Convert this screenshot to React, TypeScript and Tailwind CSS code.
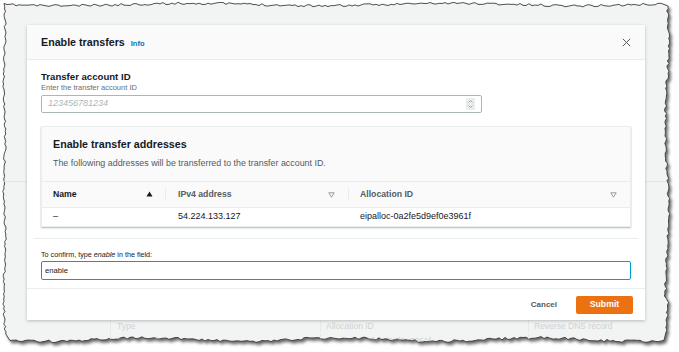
import React from 'react';

// torn paper edge around the screenshot
function makeRand(seed: number) {
  let s = seed;
  return () => {
    s = (s * 16807) % 2147483647;
    return (s - 1) / 2147483646;
  };
}

function tornPoints() {
  const r = makeRand(11);
  const pts: [number, number][] = [];
  for (let x = 4; x < 662; x += 3) pts.push([x, 4.5 + Math.sin(x / 41) * 1.2 + r() * 2.4 - 1.2]);
  for (let y = 6; y < 300; y += 2.5) pts.push([667 + Math.sin(y / 27) * 1.6 + r() * 2.4 - 1.2, y]);
  for (let y = 300; y < 334; y += 2.5) pts.push([668 + (y - 300) * -0.05 + r() * 2 - 1, y]);
  for (let x = 664; x > 8; x -= 3) pts.push([x, 339.5 + Math.sin(x / 31) * 1.8 + r() * 2.6 - 1.3]);
  for (let y = 334; y > 6; y -= 2.5) pts.push([4.5 + Math.sin(y / 17) * 0.8 + r() * 2.2 - 1.1, y]);
  return pts;
}

const FONT = { fontFamily: '"Liberation Sans", Arial, sans-serif' };

function SortUp() {
  return (
    <svg width="7" height="6" viewBox="0 0 7 6">
      <path d="M3.5 0.5 L6.5 5.5 L0.5 5.5 Z" fill="#16191f" />
    </svg>
  );
}

function SortDown() {
  return (
    <svg width="7" height="6" viewBox="0 0 7 6">
      <path d="M0.8 0.8 L6.2 0.8 L3.5 5.2 Z" fill="none" stroke="#879596" strokeWidth="0.9" />
    </svg>
  );
}

function Spinner() {
  return (
    <div className="w-[9px] h-[12px] bg-[#eaeded] rounded-[1px] flex items-center justify-center">
      <svg width="7" height="10" viewBox="0 0 7 10">
        <path d="M1.5 3.5 L3.5 1.5 L5.5 3.5" fill="none" stroke="#879596" strokeWidth="0.8" />
        <path d="M1.5 6.5 L3.5 8.5 L5.5 6.5" fill="none" stroke="#879596" strokeWidth="0.8" />
      </svg>
    </div>
  );
}

export default function App() {
  const pts = tornPoints();
  const d = 'M' + pts.map((p) => `${p[0].toFixed(1)} ${p[1].toFixed(1)}`).join(' L') + ' Z';
  const clip = 'polygon(' + pts.map((p) => `${p[0].toFixed(1)}px ${p[1].toFixed(1)}px`).join(', ') + ')';

  return (
    <div className="relative w-[679px] h-[352px] bg-white overflow-hidden" style={FONT}>
      <svg className="absolute inset-0" width="679" height="352">
        <defs>
          <filter id="sh" x="-5%" y="-5%" width="110%" height="115%">
            <feDropShadow dx="2" dy="2.5" stdDeviation="1.5" floodColor="#000" floodOpacity="0.6" />
          </filter>
        </defs>
        <path d={d} fill="#f2f3f3" stroke="#2a2a2a" strokeWidth="0.8" filter="url(#sh)" />
      </svg>

      <div className="relative w-[679px] h-[352px]" style={{ clipPath: clip }}>
        {/* page behind the modal */}
        <div className="h-[182px] border-b border-[#e3e6e6]" />
        <div className="h-[138px]" />
        <div className="flex h-[12px] text-[8.5px] text-[#cdd2d4] leading-[12px]">
          <div className="w-[110px]" />
          <div className="w-[210px] border-l border-[#e6e9e9] pl-[6px]">Type</div>
          <div className="w-[208px] border-l border-[#e6e9e9] pl-[5px]">Allocation ID</div>
          <div className="flex-1 border-l border-[#e6e9e9] pl-[5px]">Reverse DNS record</div>
        </div>
        <div className="flex h-[14px] text-[8.5px] text-[#cdd2d4] leading-[14px] mt-[2px]">
          <div className="w-[110px]" />
          <div className="w-[210px] border-l border-[#e6e9e9] pl-[6px] flex items-center gap-[3px]">
            <div className="w-[7px] h-[7px] border border-[#cdd2d4]" />
            <span>Public IP</span>
          </div>
          <div className="w-[208px] border-l border-[#e6e9e9] pl-[5px]">eipalloc-0a2fe5d9ef0e3961f</div>
          <div className="flex-1 border-l border-[#e6e9e9]" />
        </div>

        {/* modal */}
        <div className="absolute left-[27px] top-[25px] w-[618px] h-[295px] bg-white shadow-[0_1px_3px_rgba(0,28,36,0.25)] flex flex-col">
          <div className="h-[35px] bg-[#fafafa] border-b border-[#eaeded] flex items-center justify-between pl-[14px] pr-[14px]">
            <div className="flex items-baseline gap-[6px]">
              <span className="text-[10.7px] font-bold text-[#16191f]">Enable transfers</span>
              <span className="text-[7.5px] font-bold text-[#0073bb]">Info</span>
            </div>
            <svg width="9" height="9" viewBox="0 0 9 9">
              <path d="M0.8 0.8 L8.2 8.2 M8.2 0.8 L0.8 8.2" stroke="#545b64" strokeWidth="1" />
            </svg>
          </div>

          <div className="px-[14px] pt-[11px]">
            <div className="text-[9.6px] font-bold text-[#16191f] leading-[11px]">Transfer account ID</div>
            <div className="text-[7.5px] text-[#687078] leading-[10px] mt-[1px]">Enter the transfer account ID</div>
            <div className="mt-[2px] w-[441px] h-[18px] border border-[#aab7b8] rounded-[2px] flex items-center justify-between pl-[6px] pr-[6px]">
              <span className="text-[9px] italic text-[#aab7b8]">123456781234</span>
              <Spinner />
            </div>

            <div className="mt-[13px] h-[101px] border border-[#eaeded] shadow-[0_1px_1.5px_rgba(0,28,36,0.3)] flex flex-col">
              <div className="bg-[#fafafa] px-[11px] pt-[10px] pb-[12px]">
                <div className="text-[10.7px] font-bold text-[#16191f] leading-[14px]">Enable transfer addresses</div>
                <div className="text-[8.9px] text-[#545b64] leading-[11px] mt-[7px]">
                  The following addresses will be transferred to the transfer account ID.
                </div>
              </div>
              <div className="h-[27px] bg-[#fafafa] border-t border-[#eaeded] border-b flex items-center text-[8.7px] font-bold text-[#545b64]">
                <div className="w-[123px] flex items-center justify-between pl-[11px] pr-[12px]">
                  <span className="text-[#16191f]">Name</span>
                  <SortUp />
                </div>
                <div className="w-[183px] border-l border-[#eaeded] h-[13px] flex items-center justify-between pl-[12px] pr-[13px]">
                  <span className="text-[#545b64]">IPv4 address</span>
                  <SortDown />
                </div>
                <div className="flex-1 border-l border-[#eaeded] h-[13px] flex items-center justify-between pl-[11px] pr-[13px]">
                  <span className="text-[#545b64]">Allocation ID</span>
                  <SortDown />
                </div>
              </div>
              <div className="flex-1 bg-white flex items-center text-[9px] text-[#16191f]">
                <div className="w-[123px] pl-[11px]">–</div>
                <div className="w-[183px] pl-[13px]">54.224.133.127</div>
                <div className="flex-1 pl-[12px]">eipalloc-0a2fe5d9ef0e3961f</div>
              </div>
            </div>
          </div>

          <div className="mx-[7px] mt-[11px] border-t border-[#eaeded]" />

          <div className="px-[14px] pt-[10px]">
            <div className="text-[7.2px] text-[#16191f] leading-[11px]">
              To confirm, type <i>enable</i> in the field:
            </div>
            <div className="mt-[1px] h-[19px] border-[1.5px] border-[#00a1c9] rounded-[2px] flex items-center pl-[3px] text-[7.7px] text-[#16191f]">
              enable
            </div>
          </div>

          <div className="mt-[8px] flex-1 border-t border-[#eaeded] flex items-center justify-end gap-[19px] pr-[12px]">
            <span className="text-[8px] font-bold text-[#545b64]">Cancel</span>
            <div className="w-[57px] h-[18px] bg-[#ec7211] rounded-[2px] flex items-center justify-center text-[8.7px] font-bold text-white">
              Submit
            </div>
          </div>
        </div>
      </div>
    </div>
  );
}
